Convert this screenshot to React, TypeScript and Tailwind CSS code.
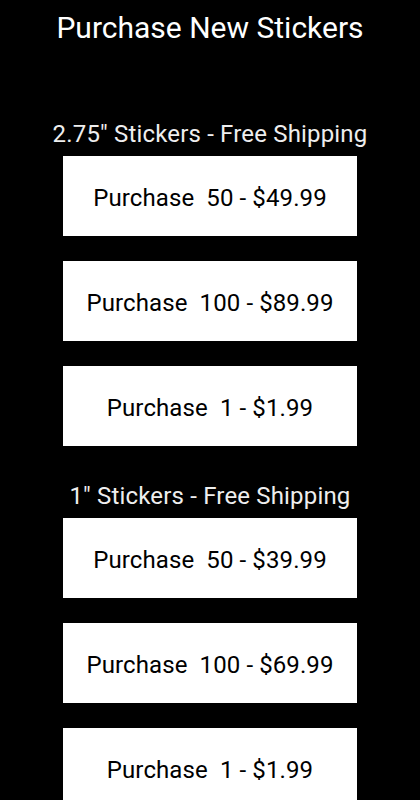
import React from "react";

const groups = [
  { title: '2.75" Stickers - Free Shipping', items: ["Purchase  50 - $49.99", "Purchase  100 - $89.99", "Purchase  1 - $1.99"] },
  { title: '1" Stickers - Free Shipping', items: ["Purchase  50 - $39.99", "Purchase  100 - $69.99", "Purchase  1 - $1.99"] },
];

export default function App() {
  return (
    <div className="min-h-screen bg-black flex flex-col items-center pt-[10px]" style={{ fontFamily: "Roboto, sans-serif" }}>
      <h1 className="text-[30px] leading-[36px] text-white font-normal">Purchase New Stickers</h1>
      <div className="flex flex-col items-center mt-[74px]">
        {groups.map((g, gi) => (
          <div key={gi} className={"flex flex-col items-center " + (gi > 0 ? "mt-[36px]" : "")}>
            <h2 className="text-[24px] leading-[28px] tracking-[0.17px] text-[#eeeeee] font-normal mb-[8px]">{g.title}</h2>
            <div className="flex flex-col gap-[25px]">
              {g.items.map((it, i) => (
                <button key={i} className="w-[294px] h-[80px] bg-white text-black text-[24px] leading-[28px] tracking-[0.1px] whitespace-pre flex items-center justify-center pt-[3px] shadow-[0_1px_1px_rgba(0,0,0,0.2)]">
                  {it}
                </button>
              ))}
            </div>
          </div>
        ))}
      </div>
    </div>
  );
}
